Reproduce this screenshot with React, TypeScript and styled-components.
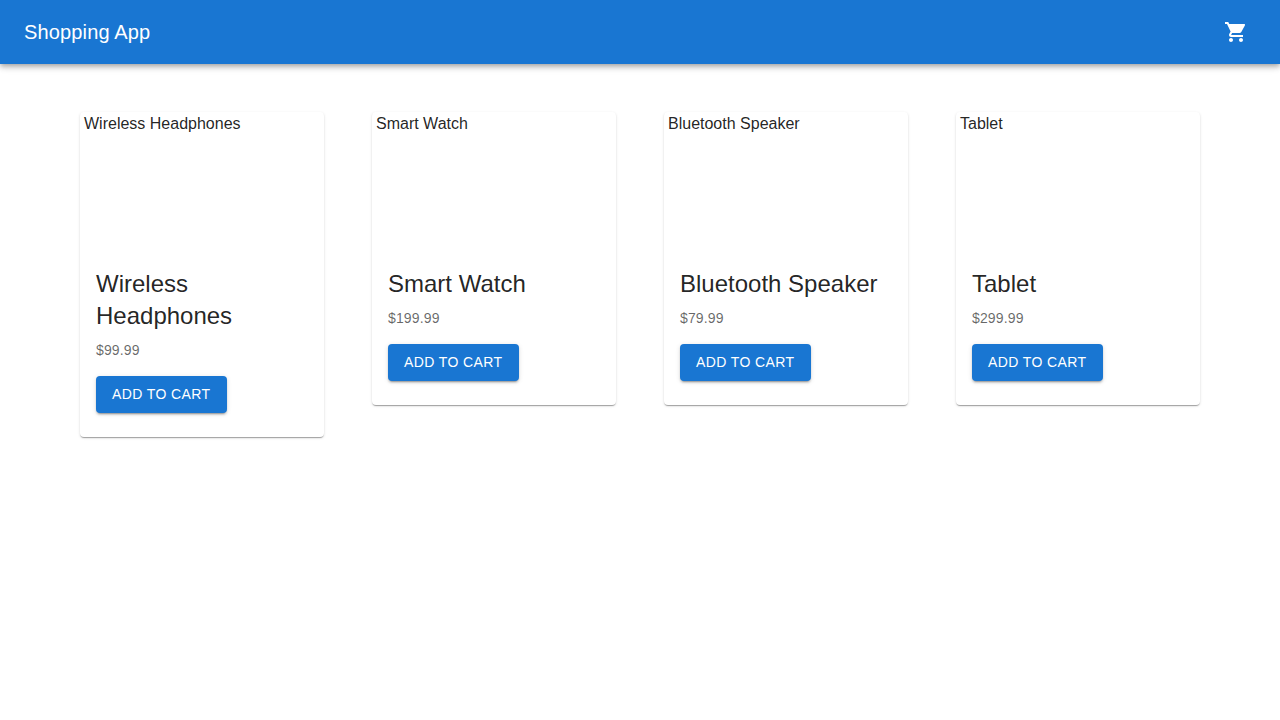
import React from "react";
import styled, { createGlobalStyle } from "styled-components";
import { MdShoppingCart } from "react-icons/md";

const GlobalStyle = createGlobalStyle`
  *, *::before, *::after { box-sizing: border-box; }
  body {
    margin: 0;
    background: #fff;
    color: rgba(0, 0, 0, 0.87);
    font-family: "Liberation Sans", Arial, sans-serif;
    font-size: 16px;
    line-height: 24px;
    -webkit-font-smoothing: antialiased;
  }
`;

const AppBar = styled.header`
  display: flex;
  align-items: center;
  justify-content: space-between;
  min-height: 64px;
  padding: 0 24px;
  background: #1976d2;
  color: #fff;
  box-shadow: 0 2px 4px -1px rgba(0, 0, 0, 0.2), 0 4px 5px 0 rgba(0, 0, 0, 0.14),
    0 1px 10px 0 rgba(0, 0, 0, 0.12);
`;

const AppTitle = styled.h1`
  margin: 0;
  font-size: 20px;
  font-weight: 400;
  line-height: 32px;
  letter-spacing: 0.0075em;
`;

const IconButton = styled.button`
  display: inline-flex;
  padding: 8px;
  border: 0;
  border-radius: 50%;
  background: transparent;
  color: inherit;
  cursor: pointer;

  &:hover { background: rgba(255, 255, 255, 0.08); }
`;

const ProductGrid = styled.main`
  display: grid;
  grid-template-columns: repeat(auto-fill, minmax(240px, 1fr));
  align-items: start;
  gap: 48px;
  max-width: 1280px;
  margin: 0 auto;
  padding: 48px 80px;
`;

const Card = styled.article`
  overflow: hidden;
  border-radius: 4px;
  background: #fff;
  box-shadow: 0 2px 1px -1px rgba(0, 0, 0, 0.2), 0 1px 1px 0 rgba(0, 0, 0, 0.14),
    0 1px 3px 0 rgba(0, 0, 0, 0.12);
`;

const CardMedia = styled.div`
  height: 140px;
  padding: 0 4px;
`;

const CardContent = styled.div`
  padding: 16px 16px 24px;
`;

const ProductName = styled.h2`
  margin: 0;
  font-size: 24px;
  font-weight: 400;
  line-height: 32px;
`;

const Price = styled.p`
  margin: 8px 0 16px;
  color: rgba(0, 0, 0, 0.6);
  font-size: 14px;
  line-height: 20px;
  letter-spacing: 0.01071em;
`;

const CartButton = styled.button`
  display: block;
  padding: 6px 16px;
  border: 0;
  border-radius: 4px;
  background: #1976d2;
  color: #fff;
  font: inherit;
  font-size: 14px;
  line-height: 25px;
  letter-spacing: 0.02857em;
  text-transform: uppercase;
  cursor: pointer;
  box-shadow: 0 3px 1px -2px rgba(0, 0, 0, 0.2), 0 2px 2px 0 rgba(0, 0, 0, 0.14),
    0 1px 5px 0 rgba(0, 0, 0, 0.12);

  &:hover { background: #1565c0; }
`;

interface Product {
  id: number;
  name: string;
  price: number;
}

const products: Product[] = [
  { id: 1, name: "Wireless Headphones", price: 99.99 },
  { id: 2, name: "Smart Watch", price: 199.99 },
  { id: 3, name: "Bluetooth Speaker", price: 79.99 },
  { id: 4, name: "Tablet", price: 299.99 },
];

function ProductCard({ product }: { product: Product }) {
  return (
    <Card>
      <CardMedia>{product.name}</CardMedia>
      <CardContent>
        <ProductName>{product.name}</ProductName>
        <Price>${product.price.toFixed(2)}</Price>
        <CartButton type="button">Add to Cart</CartButton>
      </CardContent>
    </Card>
  );
}

export default function App() {
  return (
    <>
      <GlobalStyle />
      <AppBar>
        <AppTitle>Shopping App</AppTitle>
        <IconButton type="button" aria-label="Shopping cart">
          <MdShoppingCart size={24} />
        </IconButton>
      </AppBar>
      <ProductGrid>
        {products.map((product) => (
          <ProductCard key={product.id} product={product} />
        ))}
      </ProductGrid>
    </>
  );
}
